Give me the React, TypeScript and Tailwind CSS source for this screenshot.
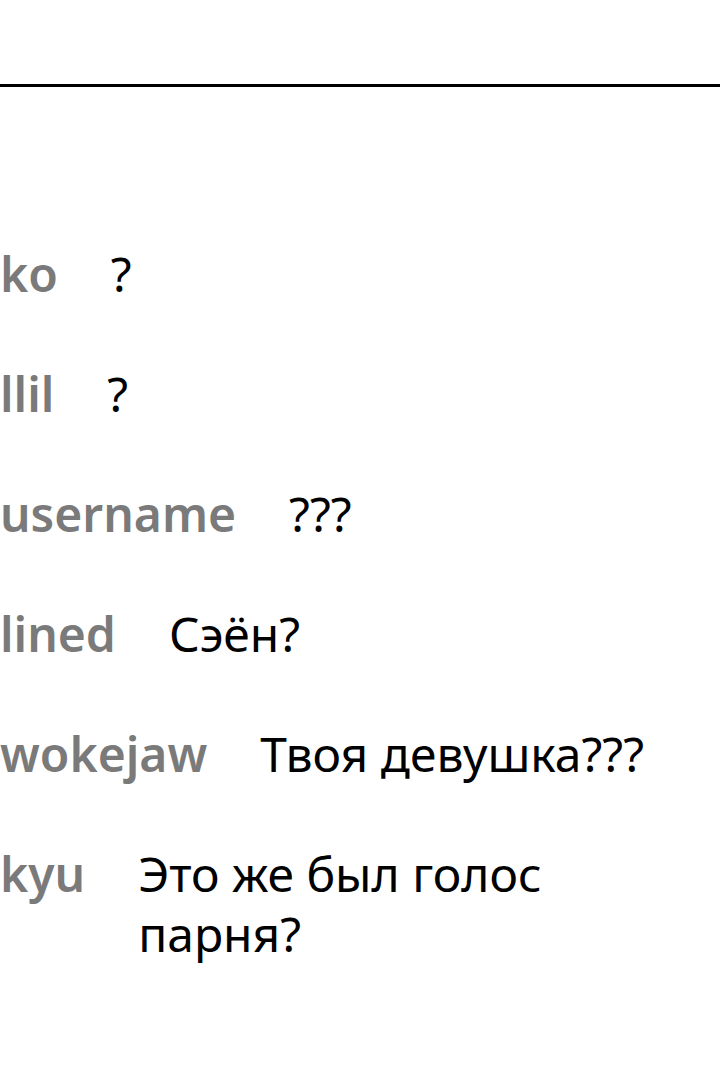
const messages = [
  { user: 'ko', text: '?' },
  { user: 'llil', text: '?' },
  { user: 'username', text: '???' },
  { user: 'lined', text: 'Сэён?' },
  { user: 'wokejaw', text: 'Твоя девушка???' },
  { user: 'kyu', text: 'Это же был голос парня?' },
];

export default function App() {
  return (
    <div className="min-h-[1065px] w-[720px] bg-white font-['Noto_Sans','Open_Sans',sans-serif]">
      {/* header area */}
      <div className="h-[87px] border-b-[3px] border-black" />

      {/* chat */}
      <div className="flex flex-col gap-[60px] pt-[157px] pr-[40px]">
        {messages.map((m) => (
          <div key={m.user} className="flex text-[48px] leading-[60px]">
            <span className="mr-[53px] shrink-0 font-semibold text-[#7a7a7a]">{m.user}</span>
            <span className="flex-1 text-black">{m.text}</span>
          </div>
        ))}
      </div>
    </div>
  );
}
